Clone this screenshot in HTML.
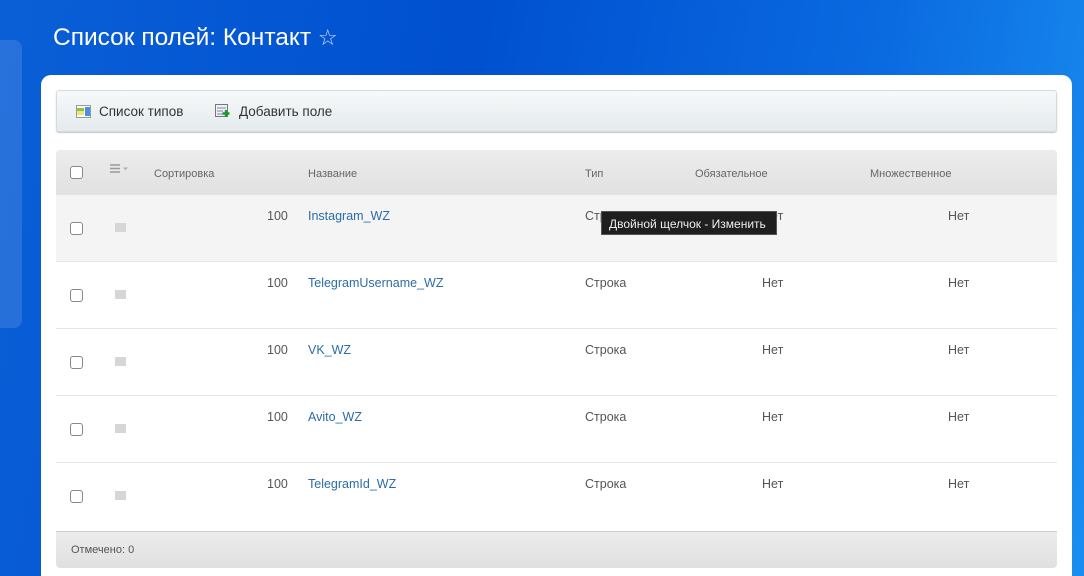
<!DOCTYPE html><html style="width:1084px;height:576px;overflow:hidden"><head><meta charset="utf-8"><style>
*{margin:0;padding:0;box-sizing:border-box}
body{width:1084px;height:576px;overflow:hidden;position:relative;font-family:"Liberation Sans","DejaVu Sans",sans-serif;background:linear-gradient(100deg,#0a5fd6 0%,#0050d0 40%,#0a6ae0 75%,#1a8ef0 100%)}
.a{position:absolute}
.side{left:0;top:40px;width:22px;height:288px;background:rgba(255,255,255,.12);border-radius:0 8px 8px 0}
h1{position:absolute;left:53px;top:24px;font-weight:normal;font-size:24.5px;color:#fff;white-space:nowrap}
.panel{left:41px;top:75px;width:1031px;height:520px;background:#fff;border-radius:10px}
.tb{left:56px;top:90px;width:1001px;height:42px;background:linear-gradient(#f7f9fa,#e4eaed);border:1px solid #d3dbe0;border-radius:3px;box-shadow:0 1px 1px #c0c8cc}
.t{font-size:13.5px;color:#333;white-space:nowrap}
.hd{left:56px;top:150px;width:1001px;height:45px;background:linear-gradient(#ececec,#e1e1e1);border-radius:4px 4px 0 0}
.h{font-size:11px;color:#666;top:168px}
.row{left:56px;width:1001px;height:67px;border-bottom:1px solid #e6e6e6}
.cb{width:13px;height:13px;border:1px solid #888;border-radius:3px;background:#fff}
.sq{width:11px;height:9px;background:#d6d6d6}
.c{font-size:12.5px;color:#555;white-space:nowrap}
.lk{font-size:12.5px;color:#2b6ca8;white-space:nowrap}
.ft{left:56px;top:531px;width:1001px;height:37px;background:linear-gradient(#ececec,#e0e0e0);border-top:1px solid #ccc;border-radius:0 0 4px 4px}
.tip{left:601px;top:211px;width:176px;height:24px;background:#1f1f1f;color:#eee;font-size:12px;padding:5px 0 0 7px;white-space:nowrap;border:1px solid #555}
</style></head><body>
<div class="a side"></div>
<h1>Список полей: Контакт <span style="font-size:22px;color:#cfe0ff">☆</span></h1>
<div class="a panel"></div>
<div class="a tb"></div>
<svg class="a" style="left:76px;top:105px" width="15" height="13"><rect x="0.5" y="0.5" width="14" height="12" fill="#fff" stroke="#999"/><rect x="1" y="3" width="7" height="3" fill="#8cc63f"/><rect x="1" y="6" width="7" height="4" fill="#f5e27a"/><rect x="9" y="2" width="5" height="9" fill="#4a8fe0"/></svg>
<div class="a t" style="left:99px;top:104px">Список типов</div>
<svg class="a" style="left:215px;top:104px" width="15" height="14"><rect x="0.5" y="0.5" width="12" height="12" fill="#eef" stroke="#777"/><line x1="2" y1="4" x2="11" y2="4" stroke="#888"/><line x1="2" y1="7" x2="8" y2="7" stroke="#888"/><line x1="2" y1="10" x2="8" y2="10" stroke="#888"/><path d="M11 6v7M7.5 9.5h7" stroke="#1a9a2a" stroke-width="2.4"/></svg>
<div class="a t" style="left:239px;top:104px">Добавить поле</div>
<div class="a hd"></div>
<div class="a cb" style="left:70px;top:166px"></div>
<svg class="a" style="left:110px;top:164px" width="22" height="10"><path d="M0 1h10M0 4.5h10M0 8h10" stroke="#999" stroke-width="1.5"/><path d="M13 3.5l2.5 2.5 2.5-2.5z" fill="#aaa"/></svg>
<div class="a h" style="left:154px">Сортировка</div>
<div class="a h" style="left:308px">Название</div>
<div class="a h" style="left:585px">Тип</div>
<div class="a h" style="left:695px">Обязательное</div>
<div class="a h" style="left:870px">Множественное</div>

<div class="a row" style="top:195px;background:#f4f4f4"></div>
<div class="a row" style="top:262px"></div>
<div class="a row" style="top:329px"></div>
<div class="a row" style="top:396px"></div>
<div class="a row" style="top:463px;border-bottom:none"></div>

<div class="a cb" style="left:70px;top:222px"></div><div class="a sq" style="left:115px;top:223px"></div>
<div class="a c" style="left:267px;top:209px">100</div><div class="a lk" style="left:308px;top:209px">Instagram_WZ</div><div class="a c" style="left:585px;top:209px">Строка</div><div class="a c" style="left:762px;top:209px">Нет</div><div class="a c" style="left:948px;top:209px">Нет</div>

<div class="a cb" style="left:70px;top:289px"></div><div class="a sq" style="left:115px;top:290px"></div>
<div class="a c" style="left:267px;top:276px">100</div><div class="a lk" style="left:308px;top:276px">TelegramUsername_WZ</div><div class="a c" style="left:585px;top:276px">Строка</div><div class="a c" style="left:762px;top:276px">Нет</div><div class="a c" style="left:948px;top:276px">Нет</div>

<div class="a cb" style="left:70px;top:356px"></div><div class="a sq" style="left:115px;top:357px"></div>
<div class="a c" style="left:267px;top:343px">100</div><div class="a lk" style="left:308px;top:343px">VK_WZ</div><div class="a c" style="left:585px;top:343px">Строка</div><div class="a c" style="left:762px;top:343px">Нет</div><div class="a c" style="left:948px;top:343px">Нет</div>

<div class="a cb" style="left:70px;top:423px"></div><div class="a sq" style="left:115px;top:424px"></div>
<div class="a c" style="left:267px;top:410px">100</div><div class="a lk" style="left:308px;top:410px">Avito_WZ</div><div class="a c" style="left:585px;top:410px">Строка</div><div class="a c" style="left:762px;top:410px">Нет</div><div class="a c" style="left:948px;top:410px">Нет</div>

<div class="a cb" style="left:70px;top:490px"></div><div class="a sq" style="left:115px;top:491px"></div>
<div class="a c" style="left:267px;top:477px">100</div><div class="a lk" style="left:308px;top:477px">TelegramId_WZ</div><div class="a c" style="left:585px;top:477px">Строка</div><div class="a c" style="left:762px;top:477px">Нет</div><div class="a c" style="left:948px;top:477px">Нет</div>

<div class="a ft"></div>
<div class="a" style="left:71px;top:544px;font-size:11px;color:#555">Отмечено: 0</div>
<div class="a tip">Двойной щелчок - Изменить</div>
</body></html>
